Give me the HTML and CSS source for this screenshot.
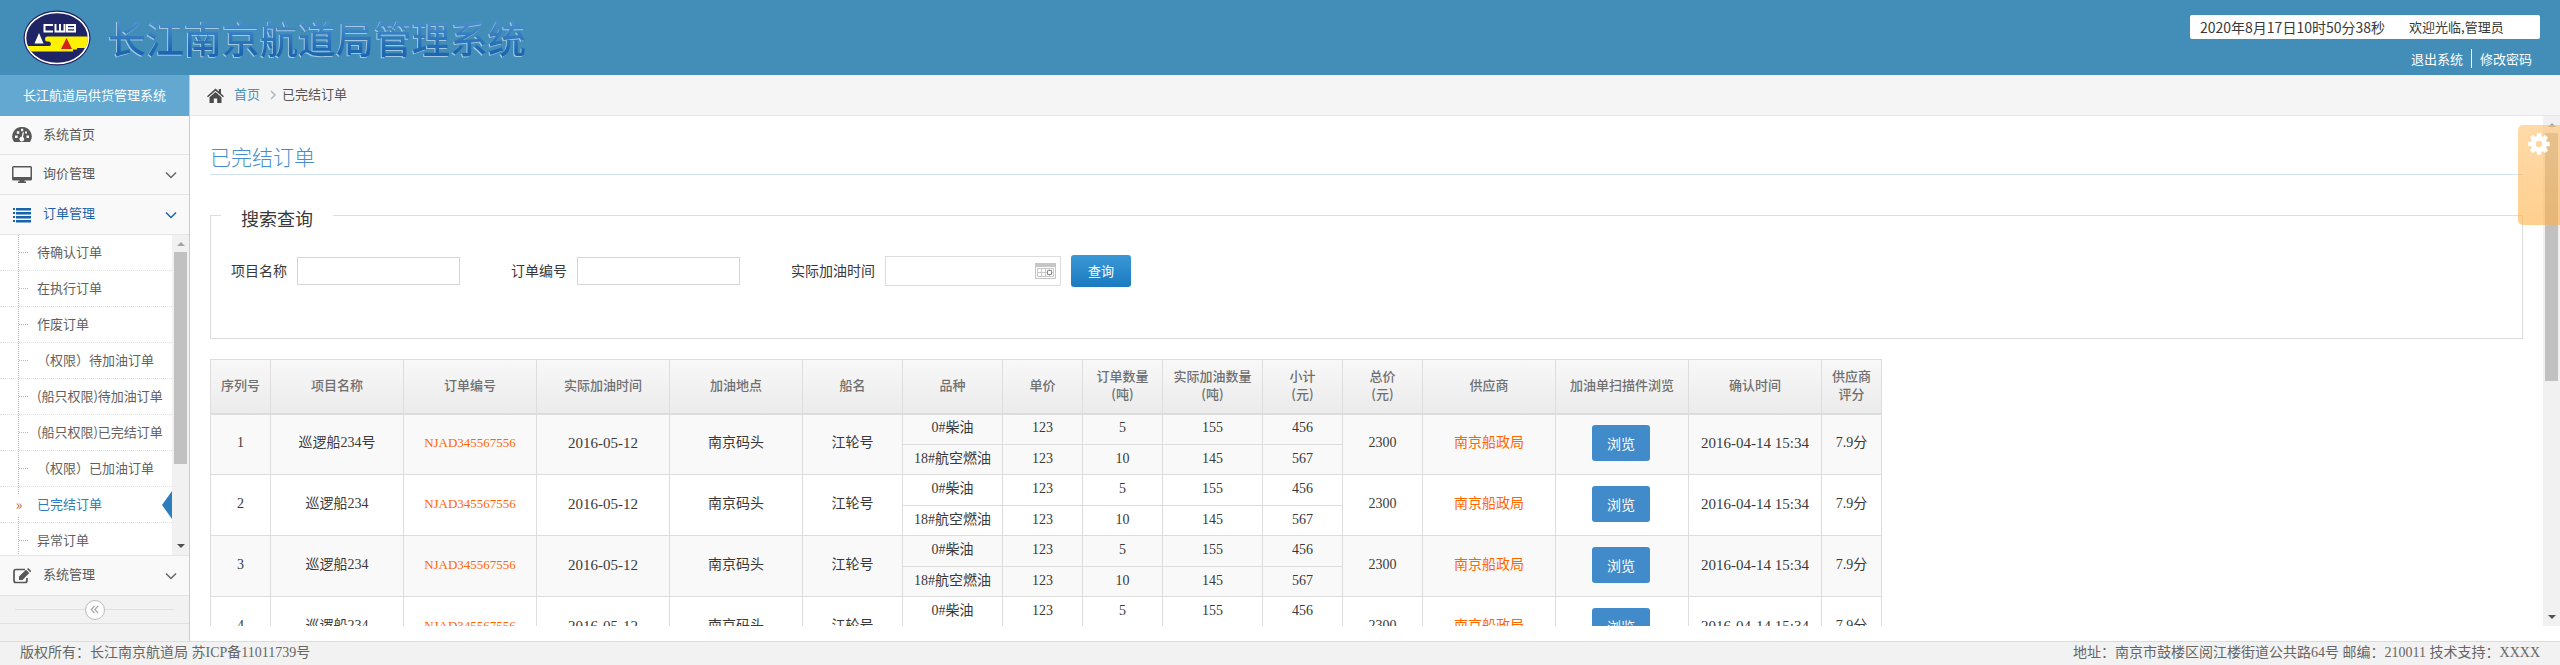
FILE: index.html
```html
<!DOCTYPE html>
<html lang="zh-CN">
<head>
<meta charset="utf-8">
<title>长江南京航道局管理系统</title>
<link rel="stylesheet" href="styles.css">
</head>
<body>
<div class="page">
  <header class="topbar">
    <div class="brand">
      <svg class="brand-logo" viewBox="0 0 68 56" role="img" aria-label="CWB">
        <defs><clipPath id="seal"><ellipse cx="34" cy="28" rx="31" ry="25"/></clipPath></defs>
        <ellipse cx="34" cy="28" rx="33.5" ry="27.5" fill="#20205f"/>
        <ellipse cx="34" cy="28" rx="31.5" ry="25.5" fill="#1f2465" stroke="#fff" stroke-width="1.6"/>
        <path clip-path="url(#seal)" fill="#fff200" d="M24 26.500H68V38H54V39.500H50V41.500H0V36H26Q28 36 28 34T26 31.500H24Q22 31.500 22 29T24 26.500Z"/>
        <path fill="#fff" d="M16 23L20.500 33.500H11.500Z"/>
        <path fill="#d3221c" d="M43.500 28L49 39H38Z"/>
        <path fill="none" stroke="#fff" stroke-width="2" d="M30 15H21.500V21.500H30M32.500 14V21.500H41.500V14M37 14V21.500M44 15H52V21.500H44ZM44 18.200H52"/>
      </svg>
      <h1 class="brand-title">长江南京航道局管理系统</h1>
    </div>
    <div class="account">
      <div class="status"><time>2020年8月17日10时50分38秒</time><span class="welcome">欢迎光临,管理员</span></div>
      <nav class="account-links"><a href="#">退出系统</a><a href="#">修改密码</a></nav>
    </div>
  </header>

  <div class="body">
    <aside class="sidebar">
      <div class="side-title">长江航道局供货管理系统</div>
      <nav>
        <a class="menu" href="#"><svg class="menu-icon" viewBox="0 0 20 16"><path fill="#585858" fill-rule="evenodd" d="M10 0A9.500 9.500 0 0 0 2 15H18A9.500 9.500 0 0 0 10 0ZM3 8.500h2.600v2.600H3ZM4.800 4.200h2.500v2.500H4.800ZM9 1.800h2.200v2.400H9ZM14.500 8.500H17v2.600h-2.500ZM13 4.400h2v2h-2ZM10.800 5L12 5.400 11 10A2.400 2.400 0 1 1 9.600 9.700Z"/></svg><span>系统首页</span></a>
        <a class="menu" href="#"><svg class="menu-icon" viewBox="0 0 20 18"><path fill="#585858" fill-rule="evenodd" d="M1.500 0H18.500Q20 0 20 1.500V13Q20 14.500 18.500 14.500H12.500V15.500H14V17H6V15.500H7.500V14.500H1.500Q0 14.500 0 13V1.500Q0 0 1.500 0ZM1.500 1.500V11H18.500V1.500Z"/></svg><span>询价管理</span><svg class="caret" viewBox="0 0 12 8"><path d="M1 1.500L6 6.500L11 1.500"/></svg></a>
        <a class="menu menu-open" href="#"><svg class="menu-icon" viewBox="0 0 20 16"><path fill="#1963aa" d="M1 1h2v2h-2zM4 1H19v2.500H4zM1 5h2v2h-2zM4 5H19v2.500H4zM1 9h2v2h-2zM4 9H19v2.500H4zM1 13h2v2h-2zM4 13H19v2.500H4z"/></svg><span>订单管理</span><svg class="caret" viewBox="0 0 12 8"><path d="M1 1.500L6 6.500L11 1.500"/></svg></a>
        <div class="submenu">
          <ul class="sub-list">
            <li><a href="#"><span>待确认订单</span></a></li>
            <li><a href="#"><span>在执行订单</span></a></li>
            <li><a href="#"><span>作废订单</span></a></li>
            <li><a href="#"><span>（权限）待加油订单</span></a></li>
            <li><a href="#"><span>(船只权限)待加油订单</span></a></li>
            <li><a href="#"><span>(船只权限)已完结订单</span></a></li>
            <li><a href="#"><span>（权限）已加油订单</span></a></li>
            <li class="current"><a href="#"><span>已完结订单</span></a></li>
            <li><a href="#"><span>异常订单</span></a></li>
          </ul>
          <div class="scrollbar" aria-hidden="true"><i class="sb-up"></i><i class="sb-thumb sb-thumb-side"></i><i class="sb-down"></i></div>
        </div>
        <a class="menu" href="#"><svg class="menu-icon" viewBox="0 0 20 16"><path fill="none" stroke="#585858" stroke-width="1.700" d="M13 1.500H4Q2 1.500 2 3.500V12.500Q2 14.500 4 14.500H13Q15 14.500 15 12.500V10"/><path fill="#585858" d="M7 12V8.500L14 1.800 17.300 5 10.500 12ZM15 1L16.200 0 19.300 3 18.200 4.200Z"/></svg><span>系统管理</span><svg class="caret" viewBox="0 0 12 8"><path d="M1 1.500L6 6.500L11 1.500"/></svg></a>
      </nav>
      <div class="collapse"><button type="button" aria-label="收起"><svg viewBox="0 0 10 10"><path d="M5 1L1.500 5L5 9M9 1L5.500 5L9 9"/></svg></button></div>
    </aside>

    <main class="main">
      <nav class="crumbs">
        <svg class="home" viewBox="0 0 17 15"><path fill="#4c4c4c" d="M8.500 0.500L11.800 3.500V1H14V5.500L17 8.200 16 9.300 8.500 2.800 1 9.300 0 8.200ZM8.500 4L14.500 9.200V15H10.200V10.500H6.800V15H2.500V9.200Z"/></svg>
        <a href="#">首页</a>
        <svg class="sep" viewBox="0 0 6 10"><path d="M1 1L5 5L1 9"/></svg>
        <span>已完结订单</span>
      </nav>
      <div class="scroll">
        <div class="content">
          <h2 class="page-title">已完结订单</h2>
          <form class="search">
            <fieldset>
              <legend>搜索查询</legend>
              <div class="fields">
                <div class="field"><label for="name">项目名称</label><input id="name" type="text"></div>
                <div class="field"><label for="no">订单编号</label><input id="no" type="text"></div>
                <div class="field"><label for="date">实际加油时间</label><span class="date"><input id="date" type="text"><svg viewBox="0 0 21 16"><path fill="#c6c6c6" d="M0 0H21V16H0ZM1 4V15H20V4Z" fill-rule="evenodd"/><path fill="none" stroke="#c6c6c6" d="M2.500 5.500H18.500V13.500H2.500ZM2.500 9.500H18.500M6.500 5.500V13.500M10.500 5.500V13.500M14.500 5.500V13.500"/><path fill="#fff" stroke="#8a8a8a" d="M12.500 7.500H16.500V11.500H12.500Z"/></svg></span></div>
                <button class="query" type="submit">查询</button>
              </div>
            </fieldset>
          </form>
          <table class="orders">
            <colgroup><col class="w60"><col class="w133"><col class="w133"><col class="w133"><col class="w133"><col class="w100"><col class="w100"><col class="w80"><col class="w80"><col class="w100"><col class="w80"><col class="w80"><col class="w133"><col class="w133"><col class="w133"><col class="w60"></colgroup>
            <thead><tr><th>序列号</th><th>项目名称</th><th>订单编号</th><th>实际加油时间</th><th>加油地点</th><th>船名</th><th>品种</th><th>单价</th><th>订单数量<br>(吨)</th><th>实际加油数量<br>(吨)</th><th>小计<br>(元)</th><th>总价<br>(元)</th><th>供应商</th><th>加油单扫描件浏览</th><th>确认时间</th><th>供应商<br>评分</th></tr></thead>
            <tbody class="odd">
              <tr><td rowspan="2">1</td><td rowspan="2">巡逻船234号</td><td rowspan="2"><a class="order-no" href="#">NJAD345567556</a></td><td rowspan="2" class="stamp">2016-05-12</td><td rowspan="2">南京码头</td><td rowspan="2">江轮号</td><td>0#柴油</td><td>123</td><td>5</td><td>155</td><td>456</td><td rowspan="2">2300</td><td rowspan="2"><a href="#">南京船政局</a></td><td rowspan="2" class="action"><button class="view" type="button">浏览</button></td><td rowspan="2" class="stamp">2016-04-14 15:34</td><td rowspan="2">7.9分</td></tr>
              <tr class="second"><td>18#航空燃油</td><td>123</td><td>10</td><td>145</td><td>567</td></tr>
            </tbody>
            <tbody>
              <tr><td rowspan="2">2</td><td rowspan="2">巡逻船234</td><td rowspan="2"><a class="order-no" href="#">NJAD345567556</a></td><td rowspan="2" class="stamp">2016-05-12</td><td rowspan="2">南京码头</td><td rowspan="2">江轮号</td><td>0#柴油</td><td>123</td><td>5</td><td>155</td><td>456</td><td rowspan="2">2300</td><td rowspan="2"><a href="#">南京船政局</a></td><td rowspan="2" class="action"><button class="view" type="button">浏览</button></td><td rowspan="2" class="stamp">2016-04-14 15:34</td><td rowspan="2">7.9分</td></tr>
              <tr class="second"><td>18#航空燃油</td><td>123</td><td>10</td><td>145</td><td>567</td></tr>
            </tbody>
            <tbody class="odd">
              <tr><td rowspan="2">3</td><td rowspan="2">巡逻船234</td><td rowspan="2"><a class="order-no" href="#">NJAD345567556</a></td><td rowspan="2" class="stamp">2016-05-12</td><td rowspan="2">南京码头</td><td rowspan="2">江轮号</td><td>0#柴油</td><td>123</td><td>5</td><td>155</td><td>456</td><td rowspan="2">2300</td><td rowspan="2"><a href="#">南京船政局</a></td><td rowspan="2" class="action"><button class="view" type="button">浏览</button></td><td rowspan="2" class="stamp">2016-04-14 15:34</td><td rowspan="2">7.9分</td></tr>
              <tr class="second"><td>18#航空燃油</td><td>123</td><td>10</td><td>145</td><td>567</td></tr>
            </tbody>
            <tbody>
              <tr><td rowspan="2">4</td><td rowspan="2">巡逻船234</td><td rowspan="2"><a class="order-no" href="#">NJAD345567556</a></td><td rowspan="2" class="stamp">2016-05-12</td><td rowspan="2">南京码头</td><td rowspan="2">江轮号</td><td>0#柴油</td><td>123</td><td>5</td><td>155</td><td>456</td><td rowspan="2">2300</td><td rowspan="2"><a href="#">南京船政局</a></td><td rowspan="2" class="action"><button class="view" type="button">浏览</button></td><td rowspan="2" class="stamp">2016-04-14 15:34</td><td rowspan="2">7.9分</td></tr>
              <tr class="second"><td>18#航空燃油</td><td>123</td><td>10</td><td>145</td><td>567</td></tr>
            </tbody>
          </table>
        </div>
        <div class="scrollbar" aria-hidden="true"><i class="sb-up"></i><i class="sb-thumb sb-thumb-main"></i><i class="sb-down"></i></div>
        <button class="settings" type="button" aria-label="设置"><svg viewBox="-11 -11 22 22"><g fill="#fff"><path fill-rule="evenodd" d="M0-8A8 8 0 1 0 0 8A8 8 0 1 0 0-8ZM0-3.300A3.300 3.300 0 1 1 0 3.300A3.300 3.300 0 1 1 0-3.300Z"/><path id="tooth" d="M-2.500-7L-2-10.800H2L2.500-7Z"/><use href="#tooth" transform="rotate(45)"/><use href="#tooth" transform="rotate(90)"/><use href="#tooth" transform="rotate(135)"/><use href="#tooth" transform="rotate(180)"/><use href="#tooth" transform="rotate(225)"/><use href="#tooth" transform="rotate(270)"/><use href="#tooth" transform="rotate(315)"/></g></svg></button>
      </div>
    </main>
  </div>

  <footer class="footer"><span>版权所有：长江南京航道局 苏ICP备11011739号</span><span>地址：南京市鼓楼区阅江楼街道公共路64号 邮编：210011 技术支持：XXXX</span></footer>
</div>
</body>
</html>
```
FILE: styles.css
```css
* { box-sizing: border-box; }
body { margin: 0; font: 13px/20px "Noto Sans CJK SC", sans-serif; color: #393939; background: #fff; }
a { color: inherit; text-decoration: none; }
button, input { font: inherit; border: 0; padding: 0; margin: 0; }
svg { display: block; flex: none; }
.page { display: flex; flex-direction: column; height: 100vh; overflow: hidden; }

.topbar { display: flex; justify-content: space-between; height: 75px; flex: none; background: #438eb9; padding: 0 20px 0 23px; }
.brand { display: flex; align-items: center; gap: 17px; }
.brand-logo { width: 68px; height: 56px; }
.brand-title { margin: 0; padding-bottom: 2px; font-size: 38px; line-height: 52px; font-weight: 500; color: transparent; background: linear-gradient(#4a8fca 20%, #1c66b2 75%); background-clip: text; -webkit-background-clip: text; filter: drop-shadow(-1px 1px 0 #a3c8e2); }
.account { width: 350px; padding-top: 15px; }
.status { display: flex; align-items: center; gap: 24px; height: 24px; padding: 0 10px; background: #fff; border-radius: 2px; }
.status time { font-size: 14px; }
.account-links { display: flex; justify-content: flex-end; margin-top: 10px; color: #fff; line-height: 19px; }
.account-links a { padding: 0 8px; }
.account-links a + a { border-left: 1px solid #fff; }

.body { display: flex; flex: 1; min-height: 0; }
.sidebar { width: 190px; flex: none; background: #f2f2f2; border-right: 1px solid #ccc; }
.side-title { height: 41px; line-height: 39px; padding-left: 23px; color: #fff; background: #62a8d1; }
.menu { display: flex; align-items: center; gap: 11px; height: 40px; padding: 0 12px; background: #f9f9f9; border-bottom: 1px solid #e5e5e5; color: #585858; }
.side-title + nav > .menu:first-child { height: 39px; }
.menu span { flex: 1; padding-bottom: 3px; }
.menu-icon { width: 20px; height: 18px; }
.caret { width: 12px; height: 8px; fill: none; stroke: #666; stroke-width: 1.500; }
.menu-open { color: #1963aa; }
.menu-open .caret { stroke: #1963aa; }
.submenu { display: flex; height: 321px; overflow: hidden; background: #fff; border-bottom: 1px solid #e5e5e5; }
.sub-list { flex: 1; margin: 0; padding: 0; list-style: none; background: repeating-linear-gradient(#9dbdd6 0 1px, transparent 1px 2px) 18px 0 / 1px 100% no-repeat; }
.sub-list li { height: 36px; border-bottom: 1px dotted #ddd; color: #616161; white-space: nowrap; }
.sub-list a { display: flex; align-items: center; height: 35px; }
.sub-list span { padding-bottom: 2px; }
.sub-list a::before { content: ""; width: 9px; margin: 0 9px 0 19px; border-top: 1px dotted #9dbdd6; }
.sub-list .current { color: #2b7dbc; }
.sub-list .current a::before { content: "»"; width: 10px; margin: 0 13px 0 14px; padding-bottom: 2px; border: 0; background: #fff; color: #c86139; font-size: 14px; text-align: center; }
.sub-list .current a::after { content: ""; margin-left: auto; border: solid transparent; border-width: 14px 10px 14px 0; border-right-color: #2b7dbc; }
.collapse { display: flex; align-items: center; height: 28px; padding: 0 15px; border-bottom: 1px solid #e0e0e0; }
.collapse::before, .collapse::after { content: ""; flex: 1; border-top: 1px solid #e0e0e0; }
.collapse button { display: grid; place-items: center; width: 20px; height: 20px; border: 1px solid #bbb; border-radius: 50%; background: #fff; }
.collapse svg { width: 9px; height: 9px; fill: none; stroke: #aaa; stroke-width: 1.500; }

.scrollbar { display: flex; flex-direction: column; align-items: center; width: 17px; flex: none; padding: 7px 0; background: #f1f1f1; }
.sb-up, .sb-down { border: solid transparent; border-width: 0 4px 4px; }
.sb-up { border-bottom-color: #a3a3a3; margin-bottom: 6px; }
.sb-down { border-width: 4px 4px 0; border-top-color: #505050; margin-top: auto; }
.sb-thumb { width: 13px; background: #c1c1c1; }
.sb-thumb-side { height: 212px; }
.sb-thumb-main { height: 248px; }

.main { flex: 1; min-width: 0; display: flex; flex-direction: column; padding-bottom: 15px; }
.crumbs { display: flex; align-items: center; flex: none; height: 41px; padding-left: 17px; background: #f5f5f5; border-bottom: 1px solid #e5e5e5; color: #555; }
.crumbs a { color: #4c8fbd; margin: 0 10px; }
.crumbs a, .crumbs span { padding-bottom: 2px; }
.crumbs .home { width: 17px; height: 15px; }
.crumbs .sep { width: 6px; height: 10px; margin-right: 6px; fill: none; stroke: #b2b6bf; stroke-width: 1.500; }
.scroll { position: relative; display: flex; flex: 1; min-height: 0; overflow: hidden; }
.content { flex: 1; min-width: 0; padding: 24px 20px 0; }
.page-title { margin: 0 0 26px; height: 35px; font-size: 21px; line-height: 32px; font-weight: 300; color: #478fca; border-bottom: 1px solid #d0e2ee; }
.search fieldset { margin: 0 0 20px; padding: 0 20px; height: 138px; border: 1px solid #ddd; }
.search { display: block; }
.search legend { margin-left: -10px; padding: 6px 20px 0; height: 28px; font-size: 18px; line-height: 22px; }
.fields { display: flex; align-items: center; padding-top: 26px; font-size: 14px; }
.field { display: flex; align-items: center; gap: 10px; margin-right: 51px; }
.field label { padding-bottom: 2px; }
.field:nth-child(3) { margin-right: 10px; }
.field input { width: 163px; height: 28px; padding: 0 5px; border: 1px solid #d5d5d5; background: #fff; }
.field .date { display: flex; align-items: center; width: 176px; height: 30px; padding-right: 4px; border: 1px solid #ddd; }
.field .date input { flex: 1; width: 0; height: 26px; border: 0; }
.date svg { width: 21px; height: 16px; }
.query { width: 60px; height: 32px; border-radius: 3px; color: #fff; font-size: 13px; background: linear-gradient(#3b98d6, #1b7bc0); }

.orders { table-layout: fixed; border-collapse: collapse; width: 1671px; font: 14px/18px "Liberation Serif", "Noto Sans CJK SC", serif; text-align: center; }
.w60 { width: 60px; } .w80 { width: 80px; } .w100 { width: 100px; } .w133 { width: 133px; }
.orders th, .orders td { padding: 0 0 2px; border: 1px solid #ddd; white-space: nowrap; }
.orders .action { padding: 0 2px 2px 0; }
.orders thead { background: linear-gradient(#f8f8f8, #ebebeb); }
.orders th { height: 54px; border-bottom-width: 2px; font: 500 13px/18px "Noto Sans CJK SC", sans-serif; color: #707070; }
.orders tbody tr { height: 31px; }
.orders tbody .second { height: 30px; }
.orders .odd { background: #f9f9f9; }
.orders a { color: #f60; }
.orders .order-no { font-size: 13px; }
.orders .stamp { font-size: 15px; }
.view { width: 58px; height: 36px; border-radius: 3px; background: #428bca; color: #fff; font: 14px/20px "Noto Sans CJK SC", sans-serif; vertical-align: middle; }
.settings { position: absolute; top: 9px; right: 0; display: flex; justify-content: flex-start; align-items: flex-start; width: 42px; height: 100px; padding: 8px 0 0 10px; border-radius: 5px 0 0 5px; background: linear-gradient(rgba(255, 193, 110, .6), rgba(255, 176, 68, .6)); }
.settings svg { width: 22px; height: 22px; }

.footer { display: flex; justify-content: space-between; align-items: center; flex: none; height: 24px; padding: 0 20px 2px; border-top: 1px solid #ddd; background: #f2f2f2; color: #666; font: 14px/20px "Liberation Serif", "Noto Sans CJK SC", serif; }
```
